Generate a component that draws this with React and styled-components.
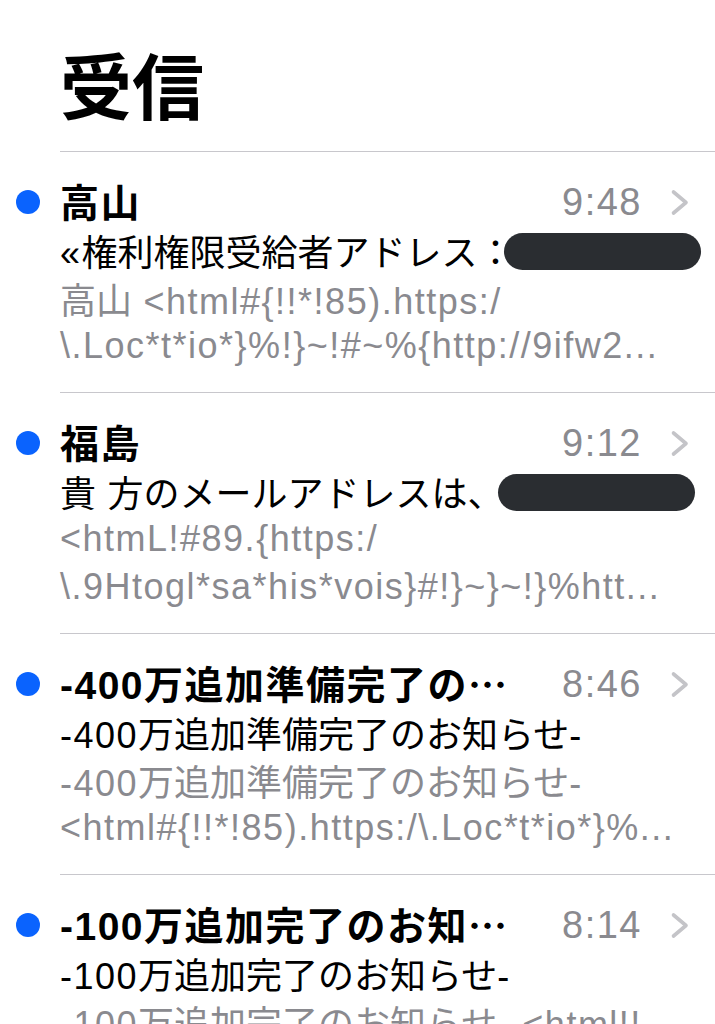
import React from 'react';
import styled, { createGlobalStyle } from 'styled-components';

const GlobalStyle = createGlobalStyle`
  html, body {
    margin: 0;
    padding: 0;
    background: #ffffff;
    overflow: hidden;
  }

  body {
    font-family: 'Liberation Sans', 'Noto Sans CJK JP', sans-serif;
    color: #000000;
    -webkit-font-smoothing: antialiased;
  }
`;

const Screen = styled.div`
  width: 715px;
  height: 1024px;
  overflow: hidden;
  background: #ffffff;
`;

const Header = styled.header`
  padding: 47px 0 32px 60px;
`;

const Title = styled.h1`
  margin: 0;
  font-family: 'Noto Sans CJK JP', sans-serif;
  font-size: 72px;
  line-height: 72px;
  font-weight: 700;
`;

const List = styled.ul`
  list-style: none;
  margin: 0;
  padding: 0;
`;

const Row = styled.li`
  display: flex;
`;

const Gutter = styled.div`
  width: 60px;
  flex-shrink: 0;
  padding-top: 39px;
`;

const UnreadDot = styled.span`
  display: block;
  width: 24px;
  height: 24px;
  margin-left: 16px;
  border-radius: 50%;
  background: #0a63fe;
`;

const Body = styled.div`
  flex: 1;
  min-width: 0;
  border-top: 1px solid #c8c7cc;
  padding: 26px 25px 22px 0;
`;

const HeadLine = styled.div`
  display: flex;
  align-items: center;
  height: 48px;
`;

const Sender = styled.div`
  flex: 1;
  min-width: 0;
  font-size: 39px;
  line-height: 48px;
  font-weight: 700;
  white-space: nowrap;
`;

const Line = styled.div`
  height: 48px;
  font-size: 36px;
  line-height: 48px;
  white-space: nowrap;
  color: ${(p) => (p.$muted ? '#8a8a8f' : '#000000')};
`;

const Latin = styled.span`
  font-family: 'Liberation Sans', sans-serif;
  letter-spacing: ${(p) => p.$track}px;
`;

const Cjk = styled.span`
  font-family: 'Noto Sans CJK JP', sans-serif;
  letter-spacing: ${(p) => p.$track}px;
`;

const Time = styled.span`
  font-size: 38px;
  letter-spacing: 1.5px;
  color: #8a8a8f;
  margin-left: 24px;
`;

const Chevron = styled.svg`
  width: 20px;
  height: 27px;
  margin-left: 28px;
  flex-shrink: 0;
`;

const Redacted = styled.span`
  display: inline-block;
  vertical-align: middle;
  width: 197px;
  height: 37px;
  margin-left: ${(p) => p.$gap}px;
  margin-top: -9px;
  border-radius: 19px;
  background: #2a2d31;
`;

const CJK_RUN = /([\u2026\u3000-\u9fff\uff00-\uffef]+)/;

// split a string into latin / cjk runs so latin text can get its own tracking
const Text = ({ children, track = 1.5, cjkTrack = 0 }) =>
  children
    .split(CJK_RUN)
    .filter(Boolean)
    .map((part, i) =>
      CJK_RUN.test(part) ? (
        <Cjk key={i} $track={cjkTrack}>
          {part}
        </Cjk>
      ) : (
        <Latin key={i} $track={track}>
          {part}
        </Latin>
      ),
    );

const mails = [
  {
    sender: '高山',
    time: '9:48',
    subject: '«権利権限受給者アドレス：',
    redactGap: -10,
    preview: ['高山 <html#{!!*!85).https:/', '\\.Loc*t*io*}%!}~!#~%{http://9ifw2...'],
  },
  {
    sender: '福島',
    time: '9:12',
    subject: '貴 方のメールアドレスは、',
    redactGap: -6,
    preview: ['<htmL!#89.{https:/', '\\.9Htogl*sa*his*vois}#!}~}~!}%htt...'],
  },
  {
    sender: '-400万追加準備完了の…',
    time: '8:46',
    subject: '-400万追加準備完了のお知らせ-',
    preview: ['-400万追加準備完了のお知らせ-', '<html#{!!*!85).https:/\\.Loc*t*io*}%...'],
  },
  {
    sender: '-100万追加完了のお知…',
    time: '8:14',
    subject: '-100万追加完了のお知らせ-',
    preview: ['-100万追加完了のお知らせ- <html!!', '#{!!*!85).https:/\\.Loc*t*io*}%...'],
  },
];

const MailRow = ({ mail }) => (
  <Row>
    <Gutter>
      <UnreadDot />
    </Gutter>
    <Body>
      <HeadLine>
        <Sender>
          <Text track={1.5} cjkTrack={1.5}>
            {mail.sender}
          </Text>
        </Sender>
        <Time>{mail.time}</Time>
        <Chevron viewBox="0 0 20 27">
          <polyline
            points="3.5,3 16,13.5 3.5,24"
            fill="none"
            stroke="#c4c4c8"
            strokeWidth="3.6"
            strokeLinecap="round"
            strokeLinejoin="round"
          />
        </Chevron>
      </HeadLine>
      <Line>
        <Text>{mail.subject}</Text>
        {mail.redactGap !== undefined && <Redacted $gap={mail.redactGap} />}
      </Line>
      {mail.preview.map((text, i) => (
        <Line key={i} $muted>
          <Text>{text}</Text>
        </Line>
      ))}
    </Body>
  </Row>
);

export default function App() {
  return (
    <Screen>
      <GlobalStyle />
      <Header>
        <Title>受信</Title>
      </Header>
      <List>
        {mails.map((mail, i) => (
          <MailRow key={i} mail={mail} />
        ))}
      </List>
    </Screen>
  );
}
